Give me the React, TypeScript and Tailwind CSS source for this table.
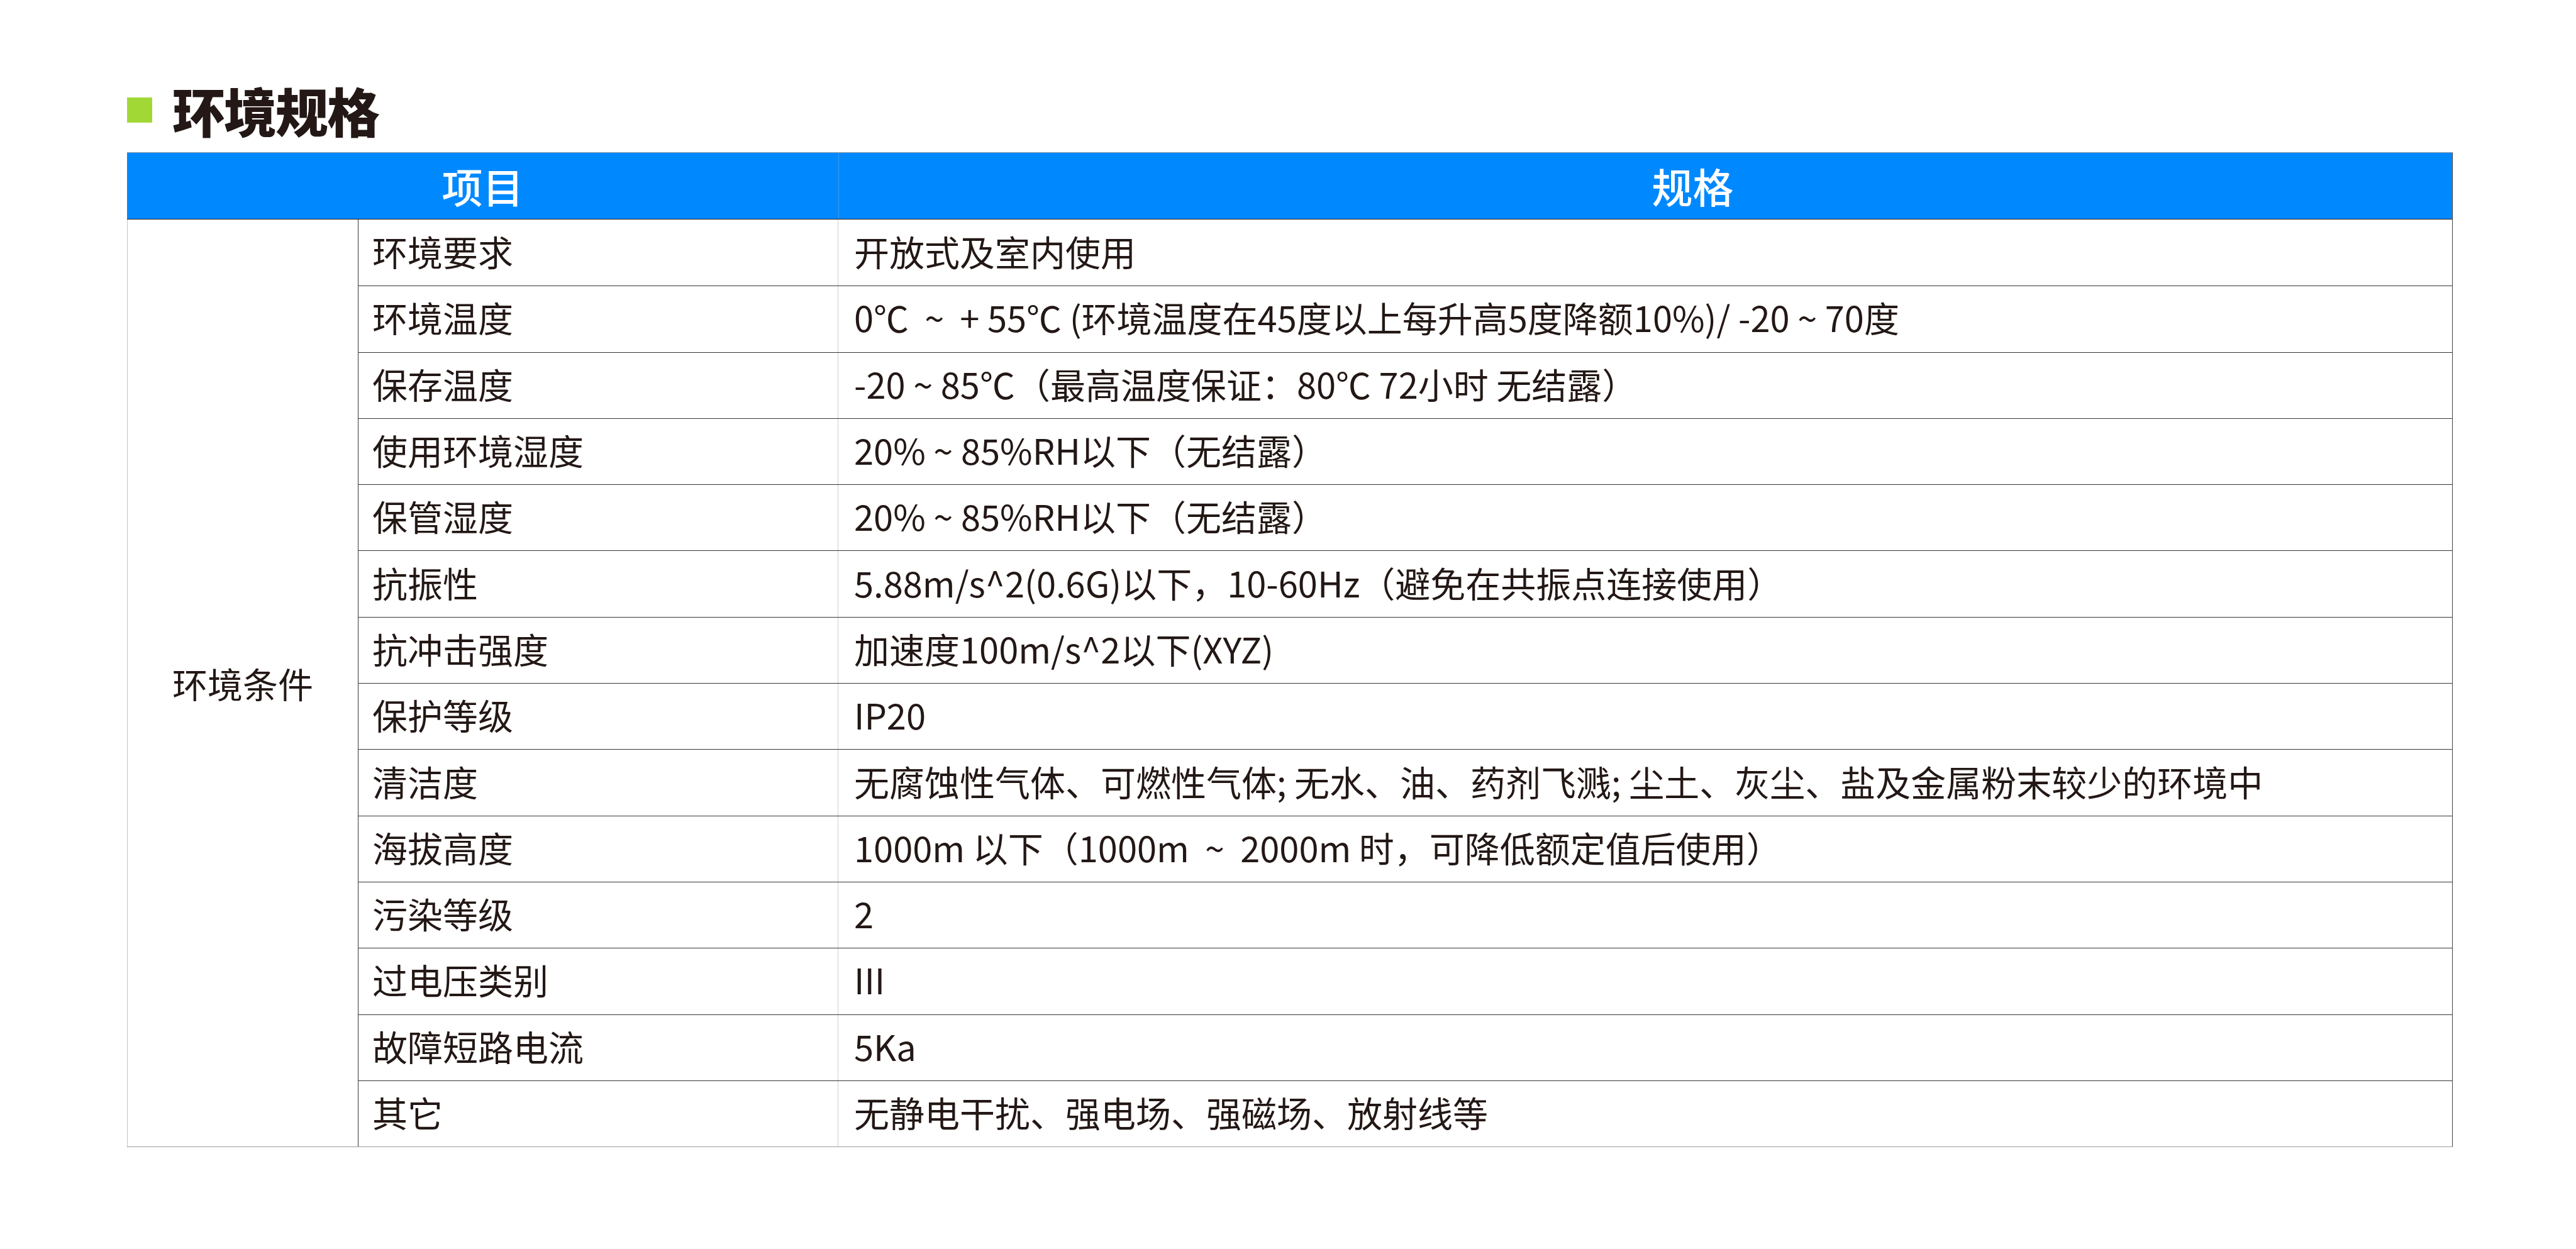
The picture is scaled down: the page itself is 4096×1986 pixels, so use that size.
import React from 'react';

const rows: [string, string][] = [
  ['环境要求', '开放式及室内使用'],
  ['环境温度', '0℃  ~  + 55℃ (环境温度在45度以上每升高5度降额10%)/ -20 ~ 70度'],
  ['保存温度', '-20 ~ 85℃（最高温度保证：80℃ 72小时 无结露）'],
  ['使用环境湿度', '20% ~ 85%RH以下（无结露）'],
  ['保管湿度', '20% ~ 85%RH以下（无结露）'],
  ['抗振性', '5.88m/s^2(0.6G)以下，10-60Hz（避免在共振点连接使用）'],
  ['抗冲击强度', '加速度100m/s^2以下(XYZ)'],
  ['保护等级', 'IP20'],
  ['清洁度', '无腐蚀性气体、可燃性气体; 无水、油、药剂飞溅; 尘土、灰尘、盐及金属粉末较少的环境中'],
  ['海拔高度', '1000m 以下（1000m  ~  2000m 时，可降低额定值后使用）'],
  ['污染等级', '2'],
  ['过电压类别', 'III'],
  ['故障短路电流', '5Ka'],
  ['其它', '无静电干扰、强电场、强磁场、放射线等'],
];

const App = () => {
  return (
    <div className="w-[4096px] h-[1986px] bg-white text-[#231815] font-['Noto_Sans_CJK_SC',sans-serif] pl-[202px] pt-[130px]">
      {/* title */}
      <div className="flex items-center h-[90px] gap-[32px]">
        <div className="w-[40px] h-[40px] bg-[#a2d836]" />
        <h1 className="text-[84px] font-black leading-none tracking-[-2px]">环境规格</h1>
      </div>

      {/* table */}
      <div className="mt-[22px] w-[3698px] border-t border-[#9a9a9a]">
        <div className="flex h-[106px] bg-[#0089ff] text-white text-[65px] font-medium border-b border-[#231815] border-r border-r-[#3a3a3a]">
          <div className="w-[1131px] flex items-center justify-center">项目</div>
          <div className="flex-1 flex items-center justify-center pl-[150px] border-l border-[#3f9bef]">规格</div>
        </div>

        <div className="flex border-b border-[#9a9a9a]">
          <div className="w-[368px] flex items-center justify-center text-[56px] border-l border-[#c4c4c4] border-r border-r-[#3a3a3a]">
            环境条件
          </div>
          <div className="flex-1 flex flex-col border-r border-[#4a4040]">
            {rows.map(([k, v], i) => (
              <div
                key={k + i}
                className={`flex h-[105.3px] text-[56px] leading-none ${i > 0 ? 'border-t border-[#3a3434]' : ''}`}
              >
                <div className="w-[763px] flex items-center pl-[22px] pb-[6px] border-r border-[#d0d0d0]">{k}</div>
                <div className="flex-1 flex items-center pl-[25px] pb-[6px] whitespace-pre">{v}</div>
              </div>
            ))}
          </div>
        </div>
      </div>
    </div>
  );
};

export default App;
